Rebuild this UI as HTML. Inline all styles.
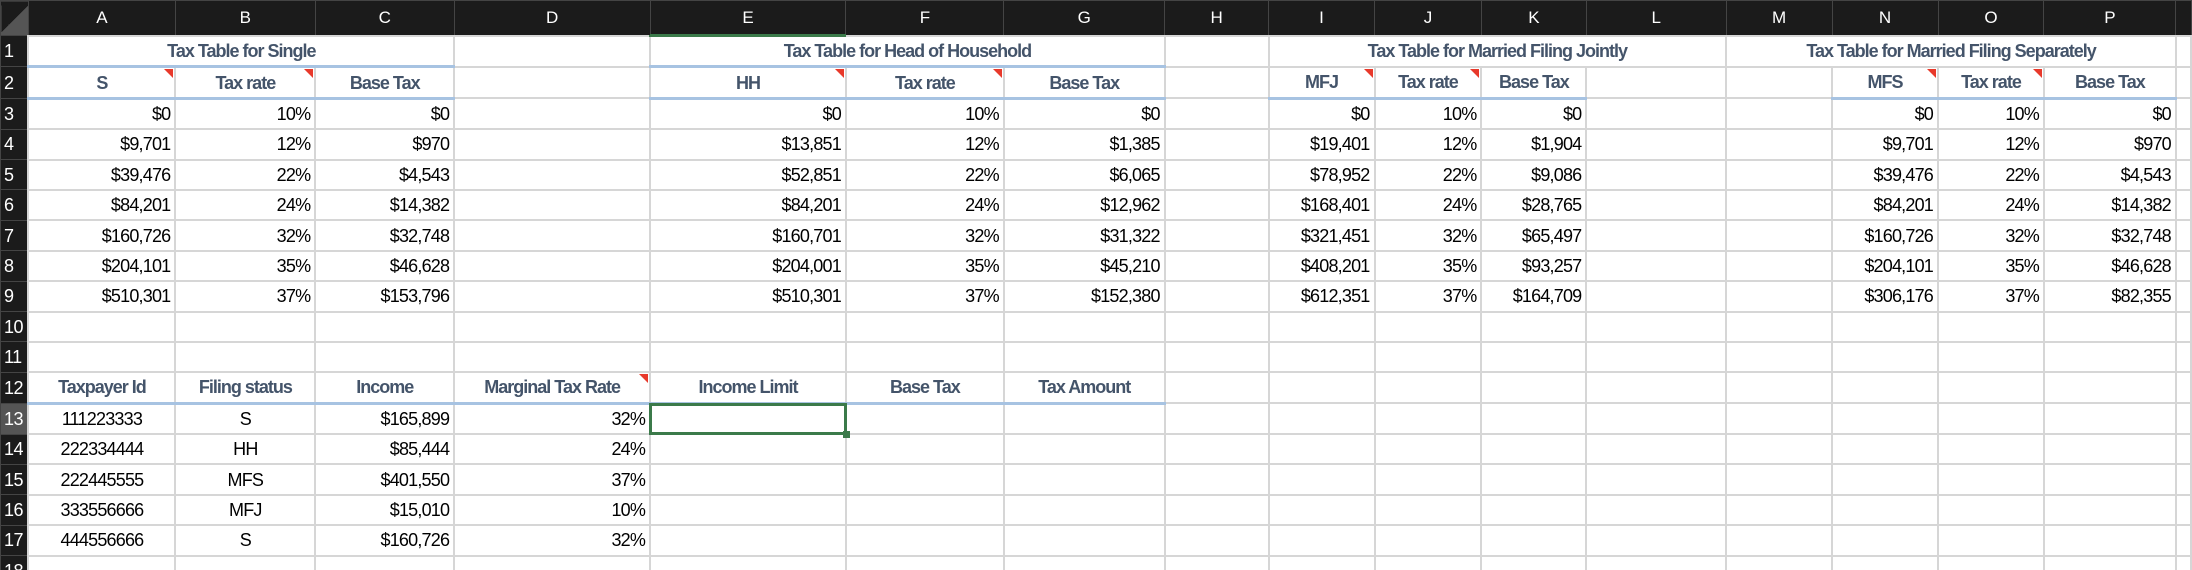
<!DOCTYPE html>
<html><head><meta charset="utf-8"><style>
html,body{margin:0;padding:0;background:#fff;width:2192px;height:570px;overflow:hidden}
table{border-collapse:collapse;table-layout:fixed;font-family:"Liberation Sans",sans-serif;font-size:18px;color:#000}
td{border:2px solid #d6d6d6;height:28.4px;padding:0 4px;white-space:nowrap;overflow:visible;text-align:right;position:relative;letter-spacing:-0.8px;line-height:20px}
tr.h td{background:#1b1b1b;color:#fff;text-align:center;height:33px;border:1px solid #444;font-size:17px;letter-spacing:0}
td.r{background:#1b1b1b;color:#fff;text-align:left;padding-left:3px;border:1px solid #444;font-size:18px;letter-spacing:-0.5px}
td.sel{background:#555}
tr.h td.sel{border-bottom:3px solid #3b7a4a}
.t{color:#44546a;font-weight:bold;text-align:center;letter-spacing:-1px}
.bb{border-bottom:3px solid #a7c3e2}
.c{text-align:center}
.red::after{content:"";position:absolute;right:1px;top:1px;border-top:9px solid #e8392b;border-left:9px solid transparent}
.box{position:absolute;left:-2px;top:-2px;right:-2px;bottom:-2px;border:3px solid #3b7a4a}
.box::after{content:"";position:absolute;right:-6px;bottom:-6px;width:7px;height:7px;background:#3b7a4a}
</style></head><body>
<table>
<colgroup><col style="width:28px"><col style="width:147px"><col style="width:140px"><col style="width:139px"><col style="width:196px"><col style="width:196px"><col style="width:158px"><col style="width:161px"><col style="width:104px"><col style="width:106px"><col style="width:107px"><col style="width:105px"><col style="width:140px"><col style="width:106px"><col style="width:106px"><col style="width:106px"><col style="width:132px"><col style="width:15px"></colgroup>
<tr class="h"><td style="background:linear-gradient(135deg,#1b1b1b 50%,#555 50%)"></td><td>A</td><td>B</td><td>C</td><td>D</td><td class="sel">E</td><td>F</td><td>G</td><td>H</td><td>I</td><td>J</td><td>K</td><td>L</td><td>M</td><td>N</td><td>O</td><td>P</td><td></td></tr>
<tr><td class="r">1</td><td colspan="3" class="t bb">Tax Table for Single</td><td></td><td colspan="3" class="t bb">Tax Table for Head of Household</td><td></td><td colspan="4" class="t">Tax Table for Married Filing Jointly</td><td colspan="4" class="t">Tax Table for Married Filing Separately</td><td></td></tr>
<tr><td class="r">2</td><td class="t bb red">S</td><td class="t bb red">Tax rate</td><td class="t bb">Base Tax</td><td></td><td class="t bb red">HH</td><td class="t bb red">Tax rate</td><td class="t bb">Base Tax</td><td></td><td class="t bb red">MFJ</td><td class="t bb red">Tax rate</td><td class="t bb">Base Tax</td><td></td><td></td><td class="t bb red">MFS</td><td class="t bb red">Tax rate</td><td class="t bb">Base Tax</td><td></td></tr>
<tr><td class="r">3</td><td>$0</td><td>10%</td><td>$0</td><td></td><td>$0</td><td>10%</td><td>$0</td><td></td><td>$0</td><td>10%</td><td>$0</td><td></td><td></td><td>$0</td><td>10%</td><td>$0</td><td></td></tr>
<tr><td class="r">4</td><td>$9,701</td><td>12%</td><td>$970</td><td></td><td>$13,851</td><td>12%</td><td>$1,385</td><td></td><td>$19,401</td><td>12%</td><td>$1,904</td><td></td><td></td><td>$9,701</td><td>12%</td><td>$970</td><td></td></tr>
<tr><td class="r">5</td><td>$39,476</td><td>22%</td><td>$4,543</td><td></td><td>$52,851</td><td>22%</td><td>$6,065</td><td></td><td>$78,952</td><td>22%</td><td>$9,086</td><td></td><td></td><td>$39,476</td><td>22%</td><td>$4,543</td><td></td></tr>
<tr><td class="r">6</td><td>$84,201</td><td>24%</td><td>$14,382</td><td></td><td>$84,201</td><td>24%</td><td>$12,962</td><td></td><td>$168,401</td><td>24%</td><td>$28,765</td><td></td><td></td><td>$84,201</td><td>24%</td><td>$14,382</td><td></td></tr>
<tr><td class="r">7</td><td>$160,726</td><td>32%</td><td>$32,748</td><td></td><td>$160,701</td><td>32%</td><td>$31,322</td><td></td><td>$321,451</td><td>32%</td><td>$65,497</td><td></td><td></td><td>$160,726</td><td>32%</td><td>$32,748</td><td></td></tr>
<tr><td class="r">8</td><td>$204,101</td><td>35%</td><td>$46,628</td><td></td><td>$204,001</td><td>35%</td><td>$45,210</td><td></td><td>$408,201</td><td>35%</td><td>$93,257</td><td></td><td></td><td>$204,101</td><td>35%</td><td>$46,628</td><td></td></tr>
<tr><td class="r">9</td><td>$510,301</td><td>37%</td><td>$153,796</td><td></td><td>$510,301</td><td>37%</td><td>$152,380</td><td></td><td>$612,351</td><td>37%</td><td>$164,709</td><td></td><td></td><td>$306,176</td><td>37%</td><td>$82,355</td><td></td></tr>
<tr><td class="r">10</td><td></td><td></td><td></td><td></td><td></td><td></td><td></td><td></td><td></td><td></td><td></td><td></td><td></td><td></td><td></td><td></td><td></td></tr>
<tr><td class="r">11</td><td></td><td></td><td></td><td></td><td></td><td></td><td></td><td></td><td></td><td></td><td></td><td></td><td></td><td></td><td></td><td></td><td></td></tr>
<tr><td class="r">12</td><td class="t bb">Taxpayer Id</td><td class="t bb">Filing status</td><td class="t bb">Income</td><td class="t bb red">Marginal Tax Rate</td><td class="t bb">Income Limit</td><td class="t bb">Base Tax</td><td class="t bb">Tax Amount</td><td></td><td></td><td></td><td></td><td></td><td></td><td></td><td></td><td></td><td></td></tr>
<tr><td class="r sel">13</td><td class="c">111223333</td><td class="c">S</td><td>$165,899</td><td>32%</td><td><div class="box"></div></td><td></td><td></td><td></td><td></td><td></td><td></td><td></td><td></td><td></td><td></td><td></td><td></td></tr>
<tr><td class="r">14</td><td class="c">222334444</td><td class="c">HH</td><td>$85,444</td><td>24%</td><td></td><td></td><td></td><td></td><td></td><td></td><td></td><td></td><td></td><td></td><td></td><td></td><td></td></tr>
<tr><td class="r">15</td><td class="c">222445555</td><td class="c">MFS</td><td>$401,550</td><td>37%</td><td></td><td></td><td></td><td></td><td></td><td></td><td></td><td></td><td></td><td></td><td></td><td></td><td></td></tr>
<tr><td class="r">16</td><td class="c">333556666</td><td class="c">MFJ</td><td>$15,010</td><td>10%</td><td></td><td></td><td></td><td></td><td></td><td></td><td></td><td></td><td></td><td></td><td></td><td></td><td></td></tr>
<tr><td class="r">17</td><td class="c">444556666</td><td class="c">S</td><td>$160,726</td><td>32%</td><td></td><td></td><td></td><td></td><td></td><td></td><td></td><td></td><td></td><td></td><td></td><td></td><td></td></tr>
<tr><td class="r">18</td><td></td><td></td><td></td><td></td><td></td><td></td><td></td><td></td><td></td><td></td><td></td><td></td><td></td><td></td><td></td><td></td><td></td></tr>
</table>
</body></html>
